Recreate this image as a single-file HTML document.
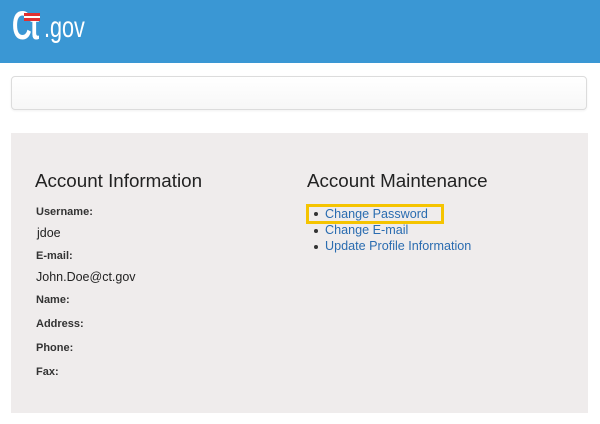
<!DOCTYPE html>
<html><head><style>
body{margin:0;width:600px;height:424px;background:#fff;font-family:"Liberation Sans",sans-serif;position:relative;overflow:hidden}
.hdr{position:absolute;left:0;top:0;width:600px;height:63px;background:#3a97d4}
.bar{position:absolute;left:11px;top:76px;width:574px;height:32px;border:1px solid #dcdcdc;border-radius:4px;background:linear-gradient(#fff,#f7f7f7);box-shadow:0 1px 2px rgba(0,0,0,.06)}
.panel{position:absolute;left:11px;top:133px;width:577px;height:280px;background:#efecec}
.a{position:absolute;white-space:nowrap}
h2{position:absolute;margin:0;font-weight:normal;font-size:18.8px;color:#222;white-space:nowrap}
.l{font-size:11px;font-weight:bold;color:#333}
.v{font-size:12.5px;color:#222}
.li{font-size:12.6px;color:#2a6cb0}
.dot{position:absolute;width:4px;height:4px;border-radius:2px;background:#333}
</style></head><body>
<div class="hdr">
<div class="a" style="left:12px;top:4px;font-size:40px;font-weight:bold;color:#fff;letter-spacing:-2px;transform:scaleX(.68);transform-origin:left">Ct</div>
<div class="a" style="left:44px;top:11px;font-size:30px;color:#fff;transform:scaleX(.72);transform-origin:left">.gov</div>
<div class="a" style="left:24px;top:13px;width:16px;height:3px;background:#e03030"></div>
<div class="a" style="left:24px;top:16px;width:16px;height:2px;background:#fff"></div>
<div class="a" style="left:24px;top:18px;width:16px;height:3px;background:#e03030"></div>
</div>
<div class="bar"></div>
<div class="panel"></div>
<h2 style="left:35px;top:170px">Account Information</h2>
<div class="a l" style="left:36px;top:206px">Username:</div>
<div class="a v" style="left:37px;top:226px">jdoe</div>
<div class="a l" style="left:36px;top:250px">E-mail:</div>
<div class="a v" style="left:36px;top:270px">John.Doe@ct.gov</div>
<div class="a l" style="left:36px;top:294px">Name:</div>
<div class="a l" style="left:36px;top:318px">Address:</div>
<div class="a l" style="left:36px;top:342px">Phone:</div>
<div class="a l" style="left:36px;top:366px">Fax:</div>
<h2 style="left:307px;top:170px">Account Maintenance</h2>
<div class="dot" style="left:314px;top:212px"></div>
<div class="dot" style="left:314px;top:229px"></div>
<div class="dot" style="left:314px;top:245px"></div>
<div class="a li" style="left:325px;top:207px">Change Password</div>
<div class="a li" style="left:325px;top:223px">Change E-mail</div>
<div class="a li" style="left:325px;top:239px">Update Profile Information</div>
<div class="a" style="left:306px;top:204px;width:132px;height:14px;border:3px solid #f5c400"></div>
</body></html>
